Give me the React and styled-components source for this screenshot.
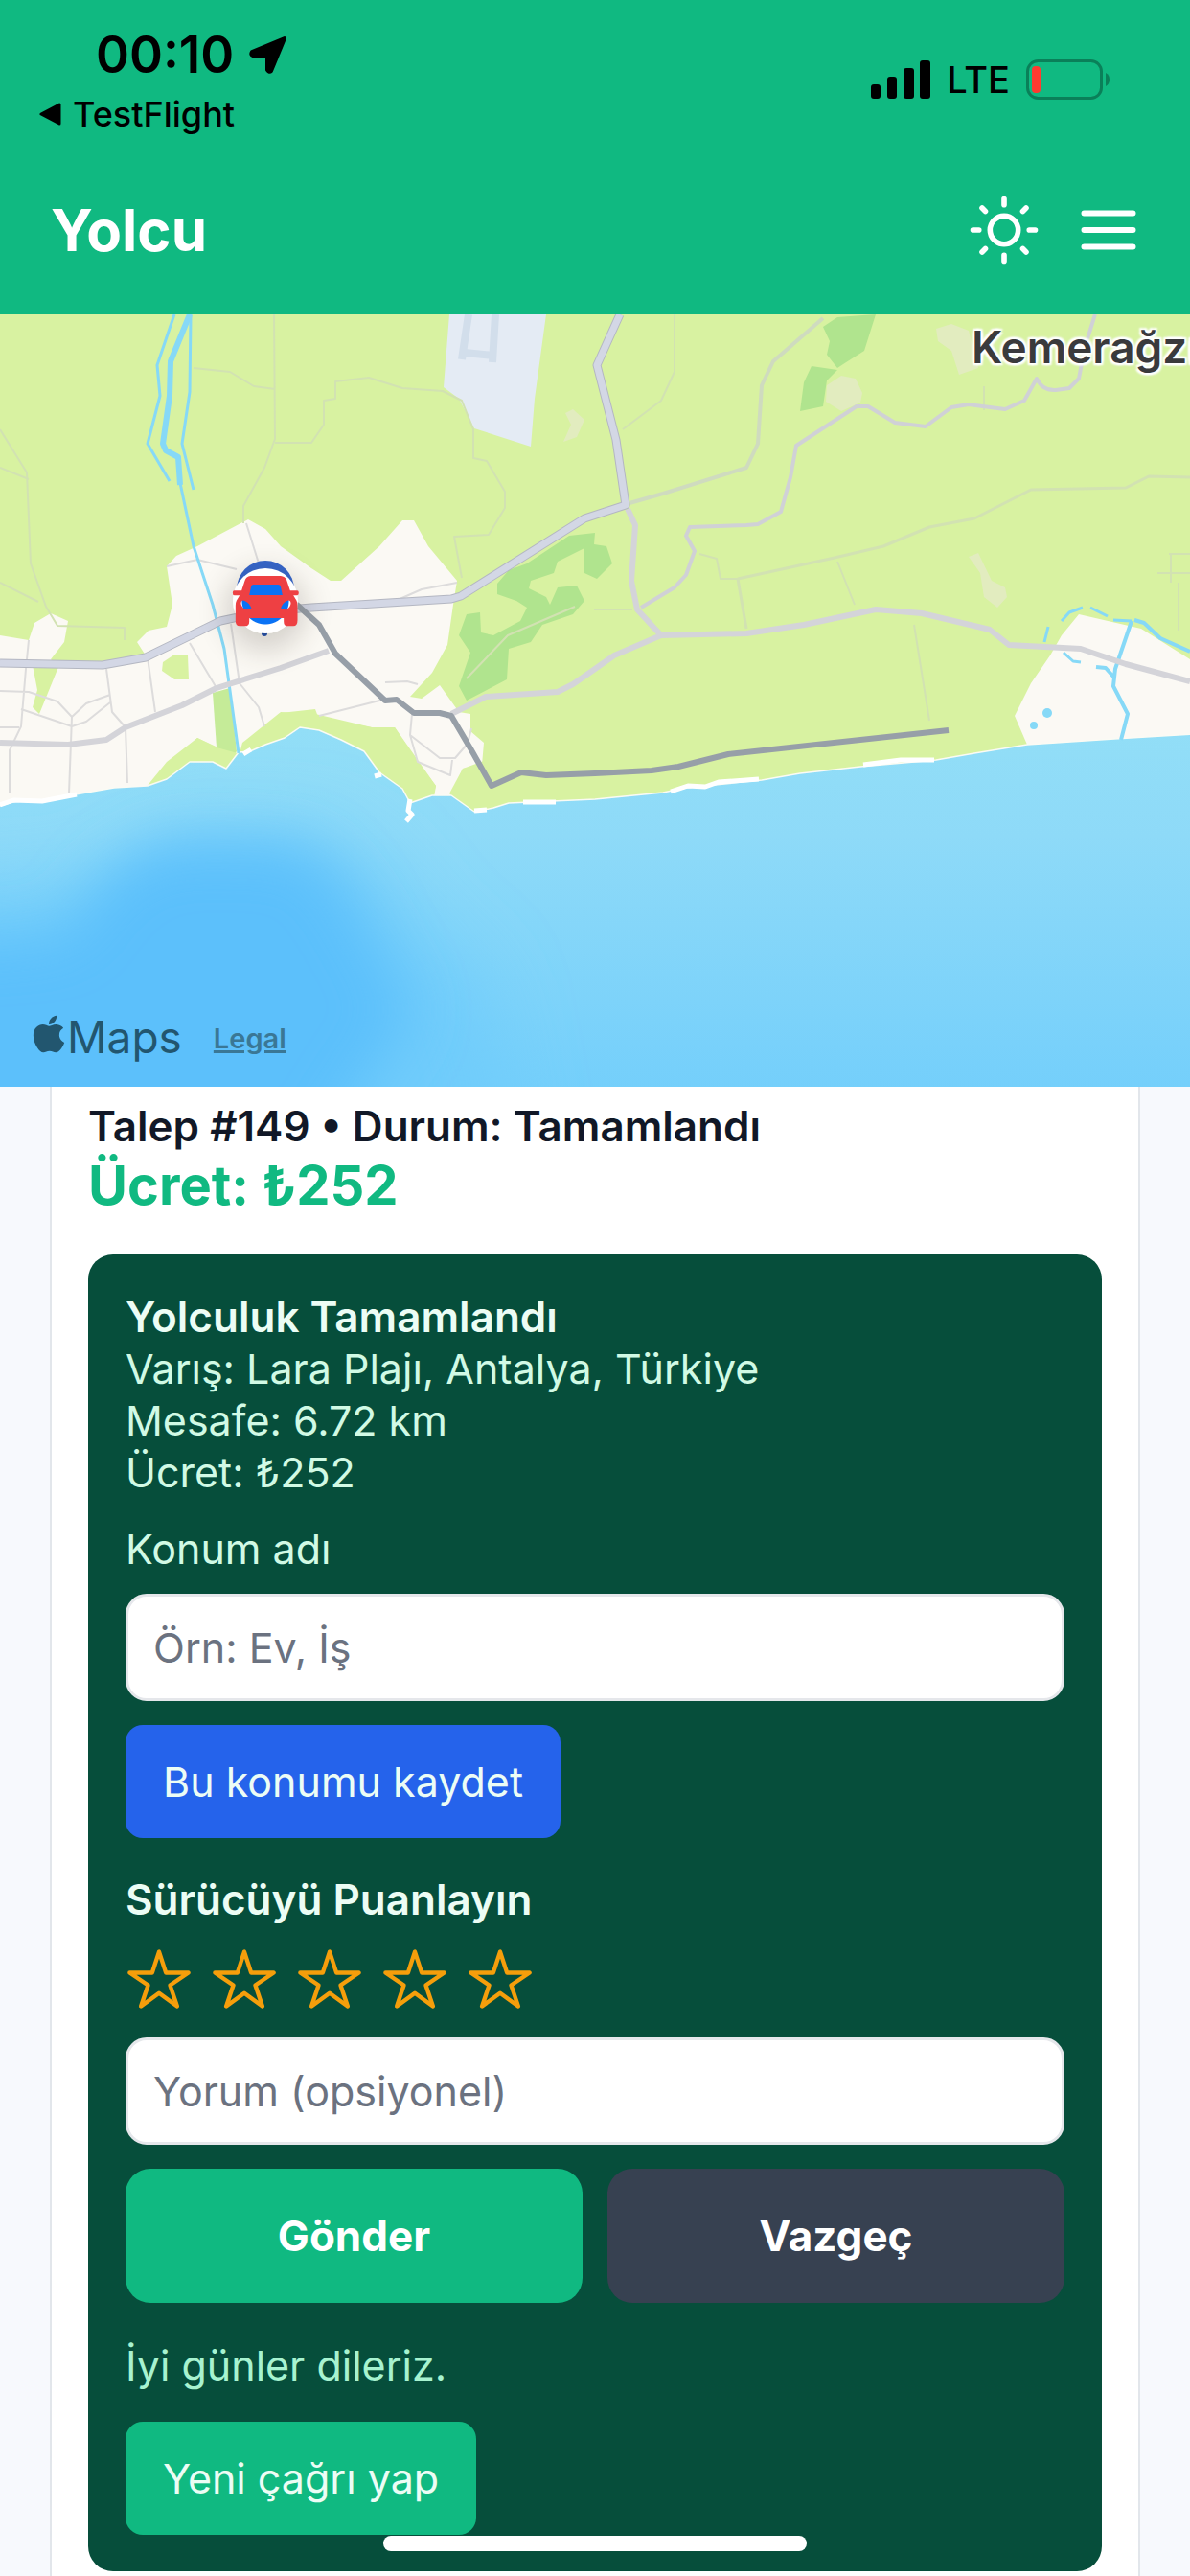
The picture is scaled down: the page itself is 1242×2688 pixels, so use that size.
import React, { useState } from 'react';
import styled, { createGlobalStyle } from 'styled-components';
import { IoStarOutline, IoStar } from 'react-icons/io5';
import { FaApple } from 'react-icons/fa';

const GlobalStyle = createGlobalStyle`
    * {
        box-sizing: border-box;
    }

    body {
        margin: 0;
        background: #f7f9fd;
        font-family: Inter, "Liberation Sans", sans-serif;
    }

    button, input {
        font-family: inherit;
    }
`

const Page = styled.div`
    min-height: 100vh;
    display: flex;
    flex-direction: column;
`

const Header = styled.header`
    background: #10b981;
`

const StatusBar = styled.div`
    display: flex;
    justify-content: space-between;
    align-items: center;
    padding: 27px 83px 0 40px;
    color: #000;
`

const StatusLeft = styled.div`
    display: flex;
    flex-direction: column;
    gap: 12px;
`

const Clock = styled.div`
    display: flex;
    align-items: center;
    gap: 15px;
    padding-left: 60px;
    font-size: 53px;
    font-weight: 600;
    line-height: 60px;
`

const BackLink = styled.a`
    display: flex;
    align-items: center;
    gap: 12px;
    color: #000;
    font-size: 36px;
    font-weight: 500;
    line-height: 40px;
    text-decoration: none;
`

const StatusRight = styled.div`
    display: flex;
    align-items: center;
    gap: 17px;
    font-size: 38px;
    font-weight: 500;
    line-height: 54px;
`

const AppBar = styled.div`
    display: flex;
    justify-content: space-between;
    align-items: center;
    padding: 61px 56px 48px 53px;
`

const AppTitle = styled.h1`
    margin: 0;
    color: #fff;
    font-size: 60px;
    font-weight: 700;
    line-height: 76px;
`

const BarActions = styled.div`
    display: flex;
    align-items: center;
    gap: 40px;
`

const IconButton = styled.button`
    display: flex;
    padding: 0;
    border: 0;
    background: none;
    color: #fff;
    cursor: pointer;
`

const MapArea = styled.section`
    position: relative;
    height: 806px;
    overflow: hidden;
    background: #d8f2a1;
`

const MapCanvas = styled.svg`
    display: block;
    width: 100%;
    height: 100%;
`

const PlaceName = styled.span`
    position: absolute;
    top: 7px;
    left: 1014px;
    color: #3a3a3c;
    font-size: 46px;
    font-weight: 600;
    line-height: 54px;
    white-space: nowrap;
    text-shadow: 0 0 4px #fff, 0 0 4px #fff, 2px 2px 2px #fff, -2px -2px 2px #fff, 2px -2px 2px #fff, -2px 2px 2px #fff;
`

const MarkerLayer = styled.div`
    position: absolute;
    inset: 0;
    z-index: 0;
`

const Marker = styled.div`
    position: absolute;
    top: 265px;
    left: 243px;
    width: 68px;
    height: 68px;
    display: flex;
    justify-content: center;
    align-items: center;
    border-radius: 50%;
    background: radial-gradient(circle, #0a72f5 24px, #fff 25px);
    box-shadow: 0 10px 30px 8px rgba(60, 50, 40, 0.2);

    &::before {
        content: '';
        position: absolute;
        inset: -8px 4px 16px;
        z-index: -1;
        border-radius: 50%;
        background: #3566cc;
    }

    svg {
        flex: none;
    }
`

const MapCredits = styled.div`
    position: absolute;
    left: 29px;
    bottom: 20px;
    display: flex;
    align-items: center;
    color: #22566f;
    font-size: 46px;
    line-height: 60px;
`

const AppleLogo = styled(FaApple)`
    margin: 0 -3px 6px 0;
`

const LegalLink = styled.a`
    margin-left: 33px;
    padding-top: 4px;
    color: #3a7795;
    font-size: 29px;
    font-weight: 600;
    text-decoration: underline;
    text-decoration-thickness: 3px;
`

const Card = styled.main`
    flex: 1;
    margin: 0 52px;
    padding: 14px 38px 0;
    border: solid #e2e6eb;
    border-width: 0 2px;
    background: #fff;
`

const RequestTitle = styled.h2`
    margin: 0;
    color: #111827;
    font-size: 44px;
    font-weight: 600;
    line-height: 54px;
`

const Fare = styled.p`
    margin: 0 0 37px;
    color: #10b981;
    font-size: 56px;
    font-weight: 700;
    line-height: 70px;
`

const TripPanel = styled.section`
    display: flex;
    flex-direction: column;
    align-items: flex-start;
    padding: 38px 39px;
    border-radius: 26px;
    background: #064e3b;
    color: #d1fae5;
    font-size: 43px;
    line-height: 54px;
`

const PanelTitle = styled.h3`
    margin: 0;
    color: #ecfdf5;
    font-size: 44px;
    font-weight: 600;
`

const Line = styled.p`
    margin: 0;
`

const Label = styled.label`
    margin: 26px 0 20px;
`

const Input = styled.input`
    width: 100%;
    height: 112px;
    padding: 0 26px;
    border: 3px solid #e5e7eb;
    border-radius: 22px;
    background: #fff;
    color: #111827;
    font-size: 43px;

    &::placeholder {
        color: #6b7280;
        opacity: 1;
    }
`

const SmallButton = styled.button`
    height: 118px;
    margin-top: ${props => props.$top};
    padding: 0 39px;
    border: 0;
    border-radius: 18px;
    background: ${props => props.$color};
    color: #ecfdf5;
    font-size: 43px;
    cursor: pointer;
`

const RatingTitle = styled(PanelTitle)`
    margin-top: 37px;
`

const Stars = styled.div`
    display: flex;
    gap: 19px;
    margin: 21px 0 26px;
`

const StarButton = styled(IconButton)`
    color: #f59e0b;
`

const Actions = styled.div`
    width: 100%;
    display: grid;
    grid-template-columns: 1fr 1fr;
    gap: 26px;
    margin: 25px 0 38px;
`

const ActionButton = styled.button`
    height: 140px;
    border: 0;
    border-radius: 26px;
    background: ${props => props.$color};
    color: #fff;
    font-size: 44px;
    font-weight: 700;
    cursor: pointer;
`

const Farewell = styled.p`
    margin: 0;
    color: #a7f3d0;
`

const HomeIndicator = styled.div`
    position: fixed;
    left: 50%;
    bottom: 26px;
    width: 442px;
    height: 16px;
    margin-left: -221px;
    border-radius: 8px;
    background: #fff;
`

const LocationArrow = () => (
    <svg width="42" height="42" viewBox="0 0 42 42" aria-hidden="true">
        <path d="M38 4 L4 18 Q2 21 5 22 L20 22 L20 37 Q22 40 24 38 Z" fill="#000" stroke="#000" strokeWidth="4" strokeLinejoin="round" />
    </svg>
)

const BackArrow = () => (
    <svg width="24" height="24" viewBox="0 0 24 24" aria-hidden="true">
        <path d="M3 12 L22 2 V22 Z" stroke="#000" strokeWidth="3" strokeLinejoin="round" />
    </svg>
)

const Signal = () => (
    <svg width="62" height="40" viewBox="0 0 62 40" aria-hidden="true">
        <rect x="0" y="25" width="10" height="15" rx="3" />
        <rect x="17" y="17" width="10" height="23" rx="3" />
        <rect x="34" y="8" width="11" height="32" rx="3" />
        <rect x="51" y="0" width="11" height="40" rx="3" />
    </svg>
)

const Battery = () => (
    <svg width="88" height="42" viewBox="0 0 88 42" aria-hidden="true">
        <rect x="1.5" y="1.5" width="77" height="39" rx="11" fill="none" stroke="#0a8059" strokeWidth="3" />
        <path d="M83 14 Q87 16 87 21 Q87 26 83 28 Z" fill="#0a8059" />
        <rect x="6" y="7" width="9" height="28" rx="4" fill="#ff3b30" />
    </svg>
)

const Sun = () => (
    <svg width="80" height="80" viewBox="0 0 512 512" fill="none" stroke="currentColor" strokeWidth="36" strokeLinecap="round" aria-hidden="true">
        <circle cx="256" cy="256" r="94" />
        <path d="M256 48v40M256 424v40M403 109l-22 22M131 381l-22 22M464 256h-40M88 256H48M403 403l-22-22M131 131l-22-22" />
    </svg>
)

const Menu = () => (
    <svg width="58" height="44" viewBox="0 0 58 44" stroke="currentColor" strokeWidth="6" strokeLinecap="round" aria-hidden="true">
        <path d="M3.5 4.5H54.5M3.5 22H54.5M3.5 39.5H54.5" />
    </svg>
)

const Car = () => (
    <svg width="71" height="54" viewBox="36 70 212 162" aria-hidden="true">
        <path
            fill="#ee4043"
            fillRule="evenodd"
            d="M94 73H188Q202 74 207 86L218 119H240Q245 119 245 126T240 134H228L238 150Q241 156 241 165V212Q241 230 228 230H210Q198 230 198 216V205H90V216Q90 230 76 230H60Q47 230 47 214V165Q47 156 50 150L60 134H44Q38 134 38 126T44 119H66L76 88Q80 74 94 73Z
               M102 100Q98 100 96 105L90 133H194L188 105Q186 100 181 100Z
               M68 150Q62 154 65 164Q70 178 82 179L97 176Q92 158 76 151Q71 148 68 150Z
               M216 150Q222 154 219 164Q214 178 202 179L189 176Q192 158 208 151Q213 148 216 150Z"
        />
    </svg>
)

const MapDrawing = () => (
    <MapCanvas viewBox="0 0 1242 806" preserveAspectRatio="xMinYMid slice" fill="none" strokeLinejoin="round" aria-hidden="true">
        <defs>
            <linearGradient id="sea" x1="0" y1="0" x2="0" y2="1">
                <stop offset="0" stopColor="#92def7" />
                <stop offset="0.3" stopColor="#8edaf8" />
                <stop offset="1" stopColor="#74cffb" />
            </linearGradient>
            <filter id="depth" x="-40%" y="-40%" width="180%" height="180%">
                <feGaussianBlur stdDeviation="30" />
            </filter>
            <filter id="shelf" x="-40%" y="-40%" width="180%" height="180%">
                <feGaussianBlur stdDeviation="40" />
            </filter>
            <clipPath id="water">
                <path d="M0 514L24 506L44 508L79 501L119 494L154 492L174 485L198 467L222 467L236 474L249 457L261 456L277 449L297 442L313 431L333 434L356 444L380 456L396 478L420 495L428 510L451 502L471 502L495 519L515 515L531 510L621 506L692 499L716 494L795 486L835 479L898 472L977 465L1017 458L1072 449L1163 443L1242 438V806H0Z" />
            </clipPath>
        </defs>

        {/* land */}
        <rect width="1242" height="806" fill="#d8f2a1" />
        <path fill="#e4ebf4" d="M469 0L463 76L479 88L495 119L554 138L558 88L570 0Z" />
        <path stroke="#d2deeb" strokeWidth="8" d="M489 0L482 47M517 0L514 50M485 40L516 43" />
        <g fill="#b0e48e">
            <path d="M519 281L531 267L550 260L594 231L621 228L620 240L633 242L639 260L623 276L610 270L610 244L582 258L578 270L554 278L552 286L570 295L574 303L582 285L602 283L610 299L598 313L566 324L554 342L531 349L529 381L487 403L479 388L491 353L479 335L487 313L501 311L502 332L515 335L543 320L550 306L539 299L519 292Z" />
            <path d="M859 13L874 3L914 0L902 38L880 52L874 56L863 42L866 28Z" />
            <path d="M847 54L874 58L863 69L859 96L835 101L839 71Z" />
        </g>
        <g fill="#e2ecbf">
            <path d="M863 74L878 64L893 67L900 82L898 92L878 101L862 91Z" />
            <path d="M977 15L993 10L1011 17L1021 56L1001 63L993 38L979 28Z" />
            <path d="M1011 253L1021 249L1035 278L1049 285L1051 295L1041 306L1027 295L1023 270Z" />
            <path d="M590 103L598 99L610 110L602 128L588 133L596 115Z" />
        </g>
        <g fill="#fbf9f4">
            <path d="M0 335L30 340L36 322L53 312L71 320L67 342L53 360L60 368L120 368L152 356L143 342L155 330L174 326L180 303L174 263L184 252L206 242L259 214L277 224L293 242L325 265L345 278L356 278L396 242L420 215L432 215L447 242L477 278L473 303L467 345L451 374L428 399L440 401L459 387L479 415L491 417L491 435L505 447L503 470L483 474L469 504L453 504L455 492L436 467L412 431L388 431L329 417L293 415L253 447L249 462L206 442L174 467L152 494L0 520Z" />
            <path d="M1126 313L1191 328L1242 360V450L1072 449L1059 419L1076 385L1096 356L1108 335Z" />
        </g>
        <g fill="#d8f2a1">
            <path d="M34 366L61 368L50 395L41 417L34 410L39 392Z" />
            <path d="M170 363L182 355L196 356L197 381L182 381L169 372Z" />
            <path fill="#c5eb98" d="M222 395L240 390L247 456L236 472L226 452Z" />
            <path d="M206 442L226 452L248 458L240 480L195 480L152 494Z" />
            <path d="M257 447L293 416L329 412L332 420L388 431L412 431L455 492L450 510H420L330 440L290 450Z" />
            <path d="M483 474L505 466L520 520H490L469 500Z" />
        </g>

        {/* sea */}
        <path fill="url(#sea)" stroke="#fbfbf4" strokeWidth="1.5" d="M-4 514L24 506L44 508L79 501L119 494L154 492L174 485L198 467L222 467L236 474L249 457L261 456L277 449L297 442L313 431L333 434L356 444L380 456L396 478L420 495L428 510L451 502L471 502L495 519L515 515L531 510L621 506L692 499L716 494L795 486L835 479L898 472L977 465L1017 458L1072 449L1163 443L1246 438V810H-4Z" />
        <g clipPath="url(#water)">
            <path fill="#70ccfb" filter="url(#shelf)" d="M-100 615L110 600Q150 550 210 545H325Q385 560 430 640L500 700L540 900H-100Z" />
            <path fill="#5cc0fb" filter="url(#depth)" d="M-80 660L70 650Q120 560 190 555L310 558Q350 580 380 640L430 730L380 800L330 880H-80Z" />
        </g>
        <path stroke="#fff" strokeWidth="5" d="M428 506L426 518L430 522L424 529M546 509H580M700 498L718 492L736 493L750 488L792 485M901 470L940 465L975 465M391 482L398 480M495 518L508 517M254 459L262 454M0 512L14 507L44 508L80 501" />

        {/* small streets */}
        <g stroke="#dddcdc" strokeWidth="2">
            <path d="M30 340L27 370L22 430L10 455L10 500M111 370L117 415L131 431L133 489M154 358L162 415M198 343L226 390M257 218L271 263M174 263L206 256L247 266M241 323L250 385L270 410L276 430M402 384L425 383L436 386M333 419L400 402M430 417L428 439L459 463H475L488 448L492 432M428 439L436 467L470 481L472 465M0 393L30 394L60 404L75 420L90 406L115 397M22 412L75 430L90 425L115 405M75 420L72 500M0 431H20" />
            <path d="M415 298L440 287L477 280" />
        </g>
        <g stroke="#d2e2b2" strokeWidth="2">
            <path d="M286 0L287 130L276 160L254 200V218M202 56L240 60L265 75L287 78M287 134H325L338 115V90L350 88V70L385 66L420 77L462 80L482 90L494 120V150L508 153L527 185V202L510 230L474 232L482 275" />
            <path d="M0 120L28 165L32 260L48 305L60 325L130 327V340M0 160L30 172M0 280L40 300" />
            <path d="M657 197L692 187L779 160L791 135L795 74L807 49L859 4" stroke="#cfdbbf" strokeWidth="4" />
            <path strokeWidth="3" d="M770 276L871 254L922 242L970 222L1017 213L1076 183L1175 181L1199 169L1242 170M770 276L779 328" />
            <path d="M730 250L748 255L752 276H770M874 258L892 303M954 324L970 424M704 0V60L690 90L650 120M1027 75V100M1220 250H1242M1208 270H1242M1222 250V280M1230 280V330M620 308H660" />
            <path d="M487 380L530 335L600 305" />
        </g>

        {/* rivers */}
        <g stroke="#86d9f7" strokeWidth="3">
            <path d="M182 0L164 53L167 85L154 135L177 174M199 0L198 81L190 135L202 183" />
            <path strokeWidth="6" d="M198 0L178 49L177 85L170 135L173 142L186 149L188 178" />
            <path d="M188 176L202 242L222 303L234 349L249 458" />
            <path strokeWidth="4" d="M1181 320L1164 370L1162 388L1177 417L1170 444M1162 378L1154 369L1144 368M1184 319L1194 322L1211 338L1242 352" />
            <path d="M1090 342L1094 326M1108 320L1116 311L1130 306M1138 306L1156 315M1162 319L1181 320M1110 353L1120 362L1128 363" />
        </g>
        <circle cx="1093" cy="416" r="5" fill="#86d9f7" />
        <circle cx="1079" cy="429" r="4" fill="#86d9f7" />

        {/* main roads */}
        <g stroke="#d4d4d9">
            <path strokeWidth="6" d="M0 447L71 449L111 444L131 431L190 408L226 390L293 369L343 351" />
            <path strokeWidth="6" d="M471 417L507 399L582 394L598 386L621 370L641 356L690 335L779 333L839 324L914 308L962 312L1033 329L1053 345L1128 349L1175 365L1242 383" />
            <path strokeWidth="6" d="M655 203L663 220L659 278L665 308L690 335" />
            <path strokeWidth="4" stroke="#d0d1d6" d="M669 306L704 285L716 272L725 247L716 231L720 222L779 220L791 219L815 206L825 170L831 137L894 96L906 96L934 113L966 117L993 97L1011 94L1049 99L1069 90L1082 67Q1088 80 1102 79L1116 77L1126 67L1132 35L1143 0" />
        </g>
        <g>
            <path stroke="#b4b7c2" strokeWidth="9" d="M0 364L107 366L152 358L230 320L277 310L325 306L471 297L481 294L610 213L653 199L643 131L623 53L647 0" />
            <path stroke="#d3d7e5" strokeWidth="7" d="M0 364L107 366L152 358L230 320L277 310L325 306L471 297L481 294L610 213L653 199L643 131L623 53L647 0" />
        </g>

        {/* trip route */}
        <path stroke="#979fa8" strokeWidth="6" d="M300 296L311 304L333 324L350 354L402 403L414 402L432 416L459 416L471 419L491 453L513 492L544 478L570 481L621 479L680 476L708 472L760 459L990 434" />
        <circle cx="276" cy="333" r="3" fill="#1f4fae" />
    </MapCanvas>
)

export default function App() {
    const [rating, setRating] = useState(0);

    return (
        <Page>
            <GlobalStyle />
            <Header>
                <StatusBar>
                    <StatusLeft>
                        <Clock>00:10 <LocationArrow /></Clock>
                        <BackLink href="#testflight"><BackArrow />TestFlight</BackLink>
                    </StatusLeft>
                    <StatusRight>
                        <Signal />
                        <span>LTE</span>
                        <Battery />
                    </StatusRight>
                </StatusBar>
                <AppBar>
                    <AppTitle>Yolcu</AppTitle>
                    <BarActions>
                        <IconButton type="button" aria-label="Tema"><Sun /></IconButton>
                        <IconButton type="button" aria-label="Menü"><Menu /></IconButton>
                    </BarActions>
                </AppBar>
            </Header>

            <MapArea>
                <MapDrawing />
                <PlaceName>Kemerağzı</PlaceName>
                <MarkerLayer>
                    <Marker><Car /></Marker>
                </MarkerLayer>
                <MapCredits>
                    <AppleLogo size={44} />
                    <span>Maps</span>
                    <LegalLink href="#legal">Legal</LegalLink>
                </MapCredits>
            </MapArea>

            <Card>
                <RequestTitle>Talep #149 • Durum: Tamamlandı</RequestTitle>
                <Fare>Ücret: ₺252</Fare>

                <TripPanel>
                    <PanelTitle>Yolculuk Tamamlandı</PanelTitle>
                    <Line>Varış: Lara Plajı, Antalya, Türkiye</Line>
                    <Line>Mesafe: 6.72 km</Line>
                    <Line>Ücret: ₺252</Line>

                    <Label htmlFor="konum">Konum adı</Label>
                    <Input id="konum" type="text" placeholder="Örn: Ev, İş" />
                    <SmallButton type="button" $color="#2563eb" $top="25px">Bu konumu kaydet</SmallButton>

                    <RatingTitle>Sürücüyü Puanlayın</RatingTitle>
                    <Stars>
                        {[1, 2, 3, 4, 5].map(n => (
                            <StarButton key={n} type="button" aria-label={`${n} yıldız`} onClick={() => setRating(n)}>
                                {n <= rating ? <IoStar size={70} /> : <IoStarOutline size={70} />}
                            </StarButton>
                        ))}
                    </Stars>
                    <Input type="text" placeholder="Yorum (opsiyonel)" aria-label="Yorum" />

                    <Actions>
                        <ActionButton type="submit" $color="#10b981">Gönder</ActionButton>
                        <ActionButton type="button" $color="#374151">Vazgeç</ActionButton>
                    </Actions>

                    <Farewell>İyi günler dileriz.</Farewell>
                    <SmallButton type="button" $color="#10b981" $top="32px">Yeni çağrı yap</SmallButton>
                </TripPanel>
            </Card>
            <HomeIndicator />
        </Page>
    )
};
